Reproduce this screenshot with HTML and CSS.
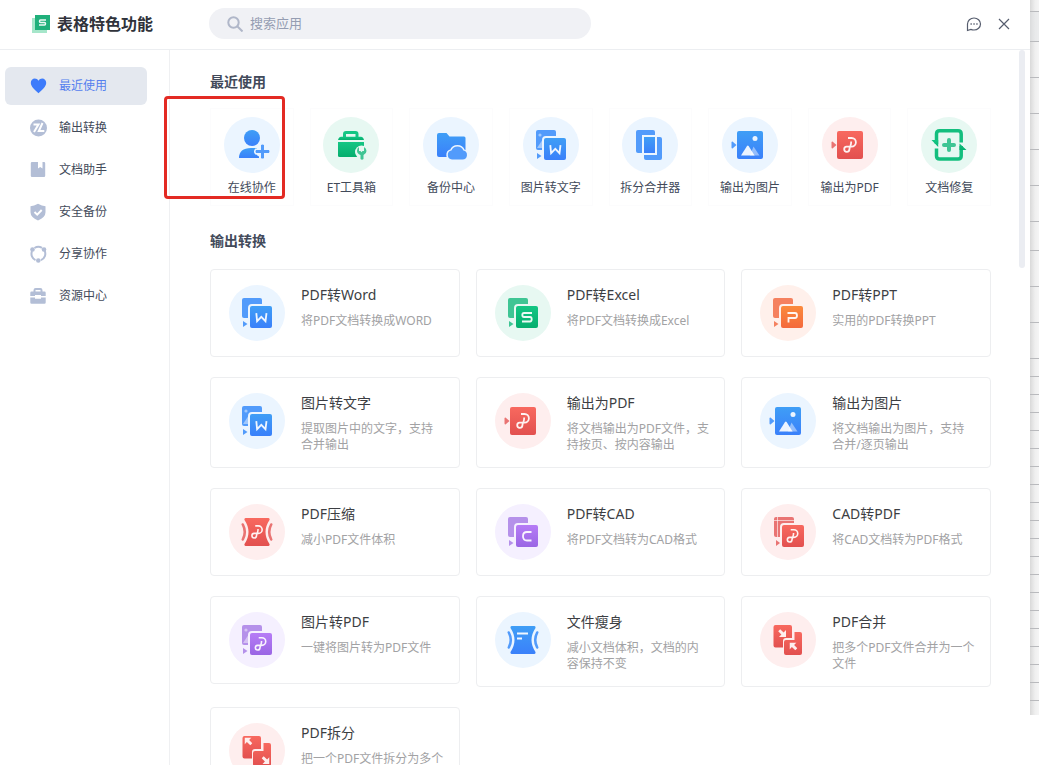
FILE: index.html
```html
<!DOCTYPE html>
<html lang="zh-CN">
<head>
<meta charset="utf-8">
<meta name="viewport" content="width=device-width, initial-scale=1">
<title>表格特色功能</title>
<link rel="stylesheet" href="styles.css">
</head>
<body>
<svg class="sprite" aria-hidden="true">
  <defs>
    <linearGradient id="g-blue" x1="0" y1="0" x2="0" y2="1"><stop offset="0" stop-color="#3f9ef6"/><stop offset="1" stop-color="#3a80fa"/></linearGradient>
    <linearGradient id="g-green" x1="0" y1="0" x2="0" y2="1"><stop offset="0" stop-color="#14c684"/><stop offset="1" stop-color="#06ae6e"/></linearGradient>
    <linearGradient id="g-red" x1="0" y1="0" x2="0" y2="1"><stop offset="0" stop-color="#f8695f"/><stop offset="1" stop-color="#e2504f"/></linearGradient>
    <linearGradient id="g-orange" x1="0" y1="0" x2="0" y2="1"><stop offset="0" stop-color="#fb8a3c"/><stop offset="1" stop-color="#f4693c"/></linearGradient>
    <linearGradient id="g-purple" x1="0" y1="0" x2="0" y2="1"><stop offset="0" stop-color="#b67cf6"/><stop offset="1" stop-color="#9a66e4"/></linearGradient>
  </defs>
  <symbol id="curl" viewBox="0 0 16 18"><path class="line" d="M6 2h3.600a4.300 4.300 0 0 1 0 8.600H4.600a2.600 2.600 0 1 0 2.800 2.800q.2-2 1-3.500.8-1.800.8-4.400"/></symbol>
  <symbol id="convert" viewBox="0 0 56 56">
    <rect class="back" x="13" y="13" width="20" height="20" rx="2"/>
    <path class="back" d="M14 36l4.500 3-4.500 3z"/>
    <rect class="ring" x="21" y="21" width="22" height="22" rx="2"/>
  </symbol>
  <symbol id="photo-back" viewBox="0 0 56 56">
    <rect class="back" x="13" y="13" width="20" height="20" rx="2"/>
    <circle class="soft" cx="17" cy="18" r="1.600"/><path class="soft" d="M14 31l6-9v9z"/>
    <path class="back" d="M14 36l4.500 3-4.500 3z"/>
    <rect class="ring" x="21" y="21" width="22" height="22" rx="2"/>
  </symbol>
  <symbol id="letter-w" viewBox="0 0 56 56"><path class="line" d="M27.300 28.200l.8 8 4.200-4.400 4.200 4.400 1-8"/></symbol>
  <symbol id="out" viewBox="0 0 56 56">
    <path class="back" d="M10.500 24.500l4 3.500-4 3.500q-1-.2-1-1v-5q0-.8 1-1z"/>
    <rect x="15" y="14" width="26" height="28" rx="2"/>
  </symbol>
  <symbol id="picture" viewBox="0 0 56 56">
    <use href="#out" width="56" height="56"/>
    <circle class="light" cx="33" cy="21.500" r="2.500"/>
    <path class="soft" d="M28 38.500l3.500-9 6 9z"/><path class="light" d="M19 38.500l6-9.500q.8-.8 1.600 0l6 9.500z"/>
  </symbol>
  <symbol id="pdf-out" viewBox="0 0 56 56">
    <use href="#out" width="56" height="56"/><use href="#curl" x="20" y="19" width="16" height="18"/>
  </symbol>
  <symbol id="squeeze" viewBox="0 0 56 56">
    <path d="M16.500 14h23q1.500.3 1 2-8 12 0 24 .5 1.700-1 2h-23q-1.500-.3-1-2 8-12 0-24-.5-1.700 1-2z"/>
    <path class="edge" d="M13.800 20.500q4 7.500 0 15M42.200 20.500q-4 7.500 0 15"/>
  </symbol>
  <symbol id="sheets" viewBox="0 0 56 56">
    <path d="M15.500 13H30a2 2 0 0 1 2 2v11h-6a3 3 0 0 0-3 3v6.500h-7.500a2 2 0 0 1-2-2V15a2 2 0 0 1 2-2z"/>
    <path d="M34.500 20H40a2 2 0 0 1 2 2v19a2 2 0 0 1-2 2H26a2 2 0 0 1-2-2V30a2 2 0 0 1 2-2h8.500z"/>
  </symbol>
  <symbol id="arrow" viewBox="0 0 8 8"><path class="light" d="M8 1v7H1l2.400-2.400L.2 2.200 2.200.2l3.400 3.200z"/></symbol>
</svg>

<div class="stage">
  <div class="window">
    <header class="topbar">
      <h1 class="brand">
        <svg class="brand-logo" viewBox="0 0 18 18" aria-hidden="true"><path fill="#a6e6ca" d="M0 3h15v15H0z"/><path fill="#20b07b" d="M3 0h15v15H3z"/><path class="line" d="M14 5H8.500q-1 0-1 1.200t1 1.200h4q1 0 1 1.300t-1 1.300H7"/></svg>
        表格特色功能
      </h1>
      <label class="search">
        <svg class="search-icon" viewBox="0 0 16 16" aria-hidden="true"><circle cx="6.500" cy="6.500" r="5.200"/><path d="M10.500 10.500l5 5"/></svg>
        <input type="search" placeholder="搜索应用" aria-label="搜索应用">
      </label>
      <div class="actions">
        <button type="button" aria-label="反馈"><svg viewBox="0 0 20 20"><path d="M3.500 16.500V10a6.500 6 0 1 1 6.500 6q-1.800 0-3.200-.6z"/><path class="dots" d="M6.500 10h1.300M9.400 10h1.300M12.300 10h1.300"/></svg></button>
        <button type="button" aria-label="关闭"><svg viewBox="0 0 20 20"><path d="M5 5l10 10M15 5L5 15"/></svg></button>
      </div>
    </header>

    <div class="body">
      <nav class="sidebar">
        <a class="nav-item active" href="#recent"><svg viewBox="0 0 18 18"><path d="M9.500 16.200C6 13.300 1.800 9.700 1.800 5.800c0-2.500 1.900-4.300 4-4.300 1.500 0 2.900.8 3.700 2.200.8-1.400 2.200-2.200 3.700-2.200 2.100 0 4 1.800 4 4.300 0 3.900-4.200 7.500-7.700 10.400z"/></svg>最近使用</a>
        <a class="nav-item" href="#convert-list"><svg viewBox="0 0 18 18"><circle cx="9.500" cy="9" r="8.500"/><path class="cut" d="M4.500 5.500h5L5 13M13.500 4L9.800 12h5.500"/></svg>输出转换</a>
        <a class="nav-item" href="#docs"><svg viewBox="0 0 18 18"><path d="M3 1h6v6.500l2.200-1.600 2.300 1.600V1H15q1.200 0 1.200 1.200v12.600q0 1.200-1.200 1.200H3q-1.200 0-1.200-1.200V2.200Q1.800 1 3 1z"/></svg>文档助手</a>
        <a class="nav-item" href="#safe"><svg viewBox="0 0 18 18"><path d="M9 .8q4 2.400 7.500 2.400v6q0 5-7.500 8.300Q1.500 14.200 1.500 9.200v-6Q5 3.200 9 .8z"/><path class="cut" d="M5.500 9l2.700 2.600L12.700 7"/></svg>安全备份</a>
        <a class="nav-item" href="#share"><svg viewBox="0 0 18 18"><path class="stroke" d="M3 6.200a7 7 0 0 0 3.500 9M15.500 5.500a7 7 0 0 1-3.500 9.700M5.500 3a7 7 0 0 1 7.500-.2"/><circle cx="3.500" cy="4.500" r="2.300"/><circle cx="15" cy="4.500" r="2.300"/><circle cx="9.300" cy="15.500" r="2.300"/></svg>分享协作</a>
        <a class="nav-item" href="#assets"><svg viewBox="0 0 18 18"><path class="stroke" d="M5.500 5V3.200q0-1.200 1.200-1.200h4.600q1.200 0 1.200 1.200V5"/><path d="M2.500 4.500h13q1.200 0 1.200 1.300V9H12V8H6v1H1.300V5.800q0-1.300 1.200-1.300zM1.300 10.500H6v1.300h6v-1.300h4.700v5q0 1.200-1.200 1.200h-13q-1.200 0-1.200-1.200z"/></svg>资源中心</a>
      </nav>

      <main class="content">
        <h2 id="recent">最近使用</h2>
        <div class="recent">
          <button type="button" class="tile"><span class="disc blue"><svg viewBox="0 0 56 56" fill="url(#g-blue)"><circle cx="28" cy="21" r="8"/><path d="M15 41q0-10 12-10h6a6 6 0 0 0-.5 6.500q1 1.500 2.500 2V41z"/><path class="back ringed" d="M37 28q1.500-1 3 0v5h5q1 1.500 0 3h-5v5q-1.500 1-3 0v-5h-5q-1-1.500 0-3h5z"/></svg></span>在线协作</button>
          <button type="button" class="tile"><span class="disc green"><svg viewBox="0 0 56 56" fill="url(#g-green)"><path fill="none" stroke="#14c684" stroke-width="3" d="M21.500 21v-4q0-1.500 1.500-1.500h9.500q1.500 0 1.500 1.500v4"/><path d="M18 19.700h20q2 0 3 3.300H15q1-3.300 3-3.300z"/><path d="M15 25h26v13.500q0 1.500-1.500 1.500h-23Q15 40 15 38.500z"/><circle class="knock" cx="38.500" cy="35" r="6.500"/><path class="back" d="M36 30v4h1.500l1 1.200 1-1.200H41v-4q2.500 1.300 2.500 4 0 2.600-3 4v4q-1.500 1.500-3 0v-4q-3.500-1.200-3.500-4.200 0-2.500 2-3.800z"/></svg></span>ET工具箱</button>
          <button type="button" class="tile"><span class="disc blue"><svg viewBox="0 0 56 56" fill="url(#g-blue)"><path d="M16 16h7.500l3 3.500H41q1.500 0 1.500 1.500v18q0 1-1 1H16q-2 0-2-2V18q0-2 2-2z"/><path class="back ringed" d="M29 42.500a4.500 4.500 0 0 1-.6-8.900 6.500 6.500 0 0 1 12 0 4.500 4.500 0 0 1-.9 8.900z"/></svg></span>备份中心</button>
          <button type="button" class="tile"><span class="disc blue"><svg viewBox="0 0 56 56" fill="url(#g-blue)"><use href="#photo-back"/><use href="#letter-w"/></svg></span>图片转文字</button>
          <button type="button" class="tile"><span class="disc blue"><svg viewBox="0 0 56 56" fill="url(#g-blue)"><rect class="back" x="14" y="13" width="19" height="23" rx="2"/><rect class="back" x="22" y="20" width="18" height="23" rx="2"/><path class="knock" d="M20 18h15v20H20z"/><path d="M22 20h11v16H22z"/></svg></span>拆分合并器</button>
          <button type="button" class="tile"><span class="disc blue"><svg viewBox="0 0 56 56" fill="url(#g-blue)"><use href="#picture"/></svg></span>输出为图片</button>
          <button type="button" class="tile"><span class="disc red"><svg viewBox="0 0 56 56" fill="url(#g-red)"><use href="#pdf-out"/></svg></span>输出为PDF</button>
          <button type="button" class="tile"><span class="disc green"><svg viewBox="0 0 56 56" fill="url(#g-green)"><path fill="none" stroke="#14be7e" stroke-width="3.500" d="M15.500 27V17q0-3.200 3.200-3.200H37q3.200 0 3.200 3.200v8.500M40.200 29v10q0 3-3.200 3H18.700q-3.200 0-3.200-3v-7.500"/><path d="M10.500 23h6.700v7zM38.500 26.500l7 6.500h-7z"/><path class="back" d="M26 23q0-2 2-2t2 2v3h3q2 0 2 2t-2 2h-3v3q0 2-2 2t-2-2v-3h-3q-2 0-2-2t2-2h3z"/></svg></span>文档修复</button>
        </div>

        <h2 id="convert-list">输出转换</h2>
        <div class="cards">
          <a class="card" href="#"><span class="disc blue"><svg viewBox="0 0 56 56" fill="url(#g-blue)"><use href="#convert"/><use href="#letter-w"/></svg></span><span class="info"><strong>PDF转Word</strong><span>将PDF文档转换成WORD</span></span></a>
          <a class="card" href="#"><span class="disc green"><svg viewBox="0 0 56 56" fill="url(#g-green)"><use href="#convert"/><path class="line" d="M37 28h-8q-1.700 0-1.700 2t1.700 2h6q1.700 0 1.700 2.200T35 36.500h-8"/></svg></span><span class="info"><strong>PDF转Excel</strong><span>将PDF文档转换成Excel</span></span></a>
          <a class="card" href="#"><span class="disc orange"><svg viewBox="0 0 56 56" fill="url(#g-orange)"><use href="#convert"/><path class="line" d="M27.500 28H35q2 0 2 2.500T35 33h-6.500v4.500"/></svg></span><span class="info"><strong>PDF转PPT</strong><span>实用的PDF转换PPT</span></span></a>
          <a class="card" href="#"><span class="disc blue"><svg viewBox="0 0 56 56" fill="url(#g-blue)"><use href="#photo-back"/><use href="#letter-w"/></svg></span><span class="info"><strong>图片转文字</strong><span>提取图片中的文字，支持合并输出</span></span></a>
          <a class="card" href="#"><span class="disc red"><svg viewBox="0 0 56 56" fill="url(#g-red)"><use href="#pdf-out"/></svg></span><span class="info"><strong>输出为PDF</strong><span>将文档输出为PDF文件，支持按页、按内容输出</span></span></a>
          <a class="card" href="#"><span class="disc blue"><svg viewBox="0 0 56 56" fill="url(#g-blue)"><use href="#picture"/></svg></span><span class="info"><strong>输出为图片</strong><span>将文档输出为图片，支持合并/逐页输出</span></span></a>
          <a class="card" href="#"><span class="disc red"><svg viewBox="0 0 56 56" fill="url(#g-red)"><use href="#squeeze"/><use href="#curl" x="21" y="20" width="14" height="16"/></svg></span><span class="info"><strong>PDF压缩</strong><span>减小PDF文件体积</span></span></a>
          <a class="card" href="#"><span class="disc purple"><svg viewBox="0 0 56 56" fill="url(#g-purple)"><use href="#convert"/><path class="line" d="M36.500 28H32q-4 0-4 4.200t4 4.300h4.500"/></svg></span><span class="info"><strong>PDF转CAD</strong><span>将PDF文档转为CAD格式</span></span></a>
          <a class="card" href="#"><span class="disc red"><svg viewBox="0 0 56 56" fill="url(#g-red)"><rect class="back" x="14" y="13" width="20" height="20" rx="2"/><path class="rule" d="M14 16.500h20M17.500 13v20"/><path class="back" d="M16 36l4 3-4 3z"/><rect class="ring" x="22" y="21" width="22" height="22" rx="2"/><use href="#curl" x="25" y="24" width="15" height="16"/></svg></span><span class="info"><strong>CAD转PDF</strong><span>将CAD文档转为PDF格式</span></span></a>
          <a class="card" href="#"><span class="disc purple"><svg viewBox="0 0 56 56" fill="url(#g-purple)"><use href="#photo-back"/><use href="#curl" x="24" y="24" width="15" height="16"/></svg></span><span class="info"><strong>图片转PDF</strong><span>一键将图片转为PDF文件</span></span></a>
          <a class="card" href="#"><span class="disc blue"><svg viewBox="0 0 56 56" fill="url(#g-blue)"><use href="#squeeze"/><path class="line" d="M22 21.500h11M22 26.500h5"/></svg></span><span class="info"><strong>文件瘦身</strong><span>减小文档体积，文档的内容保持不变</span></span></a>
          <a class="card" href="#"><span class="disc red"><svg viewBox="0 0 56 56" fill="url(#g-red)"><use href="#sheets"/><use href="#arrow" x="18" y="17" width="8" height="8"/><g transform="rotate(180 33.500 34.500)"><use href="#arrow" x="29.500" y="30.500" width="8" height="8"/></g></svg></span><span class="info"><strong>PDF合并</strong><span>把多个PDF文件合并为一个文件</span></span></a>
          <a class="card" href="#"><span class="disc red"><svg viewBox="0 0 56 56" fill="url(#g-red)"><use href="#sheets"/><g transform="rotate(180 19.500 18.500)"><use href="#arrow" x="15.500" y="14.500" width="8" height="8"/></g><use href="#arrow" x="32.500" y="33" width="8" height="8"/></svg></span><span class="info"><strong>PDF拆分</strong><span>把一个PDF文件拆分为多个文件</span></span></a>
        </div>
        <div class="thumb"></div>
      </main>
    </div>
    <div class="highlight"></div>
  </div>

  <div class="sheet" aria-hidden="true">
    <i class="first"></i><i class="head"></i><i class="tall"></i><i class="tall"></i><i class="tall"></i><i class="tall"></i><i class="tall"></i><i class="mid"></i><i class="tall"></i><i class="tall"></i><i class="tall"></i>
    <i></i><i></i><i></i><i></i><i></i><i></i><i></i><i></i><i></i><i></i><i></i><i></i><i></i><i></i><i></i><i></i><i></i><i></i><i></i><i class="last"></i>
  </div>
</div>
</body>
</html>
```
FILE: styles.css
```css
* { box-sizing: border-box; }

body {
  margin: 0;
  background: #fff;
  color: #424a5a;
  font: 12px/16px "Noto Sans", "Noto Sans CJK SC", sans-serif;
}

a { color: inherit; text-decoration: none; }
button { border: 0; padding: 0; background: none; font: inherit; color: inherit; }
svg { display: block; flex: none; }
.sprite { position: absolute; width: 0; height: 0; }

.stage { display: flex; height: 100vh; overflow: hidden; }

.window {
  position: relative;
  flex: 1;
  min-width: 0;
  display: flex;
  flex-direction: column;
}

/* top bar */
.topbar {
  display: flex;
  align-items: center;
  padding: 8px 16px 10px 32px;
  border-bottom: 1px solid #eceef1;
}
.brand {
  display: flex;
  align-items: center;
  gap: 7px;
  width: 177px;
  margin: 0;
  font-size: 16px;
  line-height: 24px;
  font-weight: 600;
  color: #30333b;
}
.brand-logo { width: 18px; height: 18px; }
.brand-logo .line { stroke-width: 1.5; }
.search {
  display: flex;
  align-items: center;
  gap: 7px;
  flex: 0 1 382px;
  height: 31px;
  padding: 0 18px;
  border-radius: 16px;
  background: #f0f1f5;
}
.search-icon { width: 16px; height: 16px; fill: none; stroke: #b0b7c9; stroke-width: 2; }
.search input {
  flex: 1;
  min-width: 0;
  border: 0;
  padding: 0 0 2px;
  outline: 0;
  background: none;
  font: inherit;
  font-size: 13px;
  color: #333a48;
}
.search input::placeholder { color: #959db2; opacity: 1; }
.actions { display: flex; gap: 10px; margin-left: auto; }
.actions svg { width: 20px; height: 20px; fill: none; stroke: #565d6e; stroke-width: 1.2; }
.actions .dots { stroke-width: 1.6; }

.body { flex: 1; display: flex; min-height: 0; }

/* side navigation */
.sidebar {
  flex: none;
  display: flex;
  flex-direction: column;
  gap: 4px;
  width: 170px;
  padding: 17px 22px 0 5px;
  border-right: 1px solid #eff0f2;
}
.nav-item {
  display: flex;
  align-items: center;
  gap: 12px;
  height: 38px;
  padding-left: 24px;
  border-radius: 6px;
}
.nav-item svg { width: 18px; height: 18px; fill: #b3bed6; }
.nav-item .cut { fill: none; stroke: #fff; stroke-width: 2; }
.nav-item .stroke { fill: none; stroke: #b3bed6; stroke-width: 2; }
.nav-item.active { background: #e4e8ef; color: #5580ee; }
.nav-item.active svg { fill: #3d7bfb; }

/* content */
.content {
  position: relative;
  flex: 1;
  min-width: 0;
  padding: 22px 39px 0 40px;
  overflow: hidden;
}
.content h2 {
  margin: 0;
  font-size: 14px;
  line-height: 20px;
  font-weight: 600;
}
.recent {
  display: grid;
  grid-template-columns: repeat(8, minmax(0, 1fr));
  gap: 16px;
  margin: 16px 0 25px;
}
.tile {
  display: flex;
  flex-direction: column;
  align-items: center;
  gap: 7px;
  padding: 8px 0 9px;
  border: 1px solid #fcfcfd;
  white-space: nowrap;
}
.cards {
  display: grid;
  grid-template-columns: repeat(3, minmax(0, 1fr));
  align-items: start;
  gap: 20px 16px;
  margin-top: 18px;
}
.card {
  display: flex;
  gap: 16px;
  padding: 15px 15px 14px 18px;
  border: 1px solid #edeef0;
  border-radius: 4px;
}
.info { flex: 1; min-width: 0; display: flex; flex-direction: column; gap: 8px; color: #a2a2a4; }
.info strong { font-size: 14px; line-height: 20px; font-weight: 400; color: #3c3e43; }

.disc { flex: none; width: 56px; height: 56px; border-radius: 50%; background: var(--tint); }
.disc svg { width: 56px; height: 56px; }
.card .disc { margin-bottom: 1px; }
.blue { --tint: #ebf5ff; --back: #529bfb; }
.green { --tint: #e7f8f2; --back: #3fc594; }
.red { --tint: #feeeee; --back: #e97473; }
.orange { --tint: #fff0eb; --back: #f5815f; }
.purple { --tint: #f5f0ff; --back: #b591ea; }
.back { fill: var(--back); }
.ring { stroke: var(--tint); stroke-width: 4; paint-order: stroke; }
.ringed { stroke: var(--tint); stroke-width: 3; paint-order: stroke; }
.knock { fill: var(--tint); }
.light { fill: #fff; fill-opacity: .9; }
.soft { fill: #fff; fill-opacity: .45; }
.line { fill: none; stroke: #fff; stroke-opacity: .92; stroke-width: 1.8; }
.edge { fill: none; stroke: var(--back); stroke-width: 2.6; stroke-linecap: round; }
.rule { fill: none; stroke: #fff; stroke-opacity: .6; stroke-width: 1; }

.thumb {
  position: absolute;
  top: 0;
  right: 5px;
  width: 6px;
  height: 218px;
  border-radius: 3px;
  background: #ebedf2;
}

/* marker drawn over the first shortcut */
.highlight {
  position: absolute;
  left: 164px;
  top: 96px;
  width: 121px;
  height: 103px;
  border: 3px solid #e32a23;
  border-radius: 4px;
}

/* spreadsheet rows visible behind the window */
.sheet {
  align-self: flex-start;
  flex: none;
  width: 9px;
  background: linear-gradient(to right, #d9d9d9, #efefef 5px, #f5f5f5);
}
.sheet i { display: block; height: 18px; border-bottom: 1px solid #b9babd; }
.sheet .first { height: 12px; }
.sheet .head { height: 30px; background: #dfe1e466; }
.sheet .tall { height: 36px; }
.sheet .mid { height: 29px; }
.sheet .last { height: 14px; border: 0; }
```
